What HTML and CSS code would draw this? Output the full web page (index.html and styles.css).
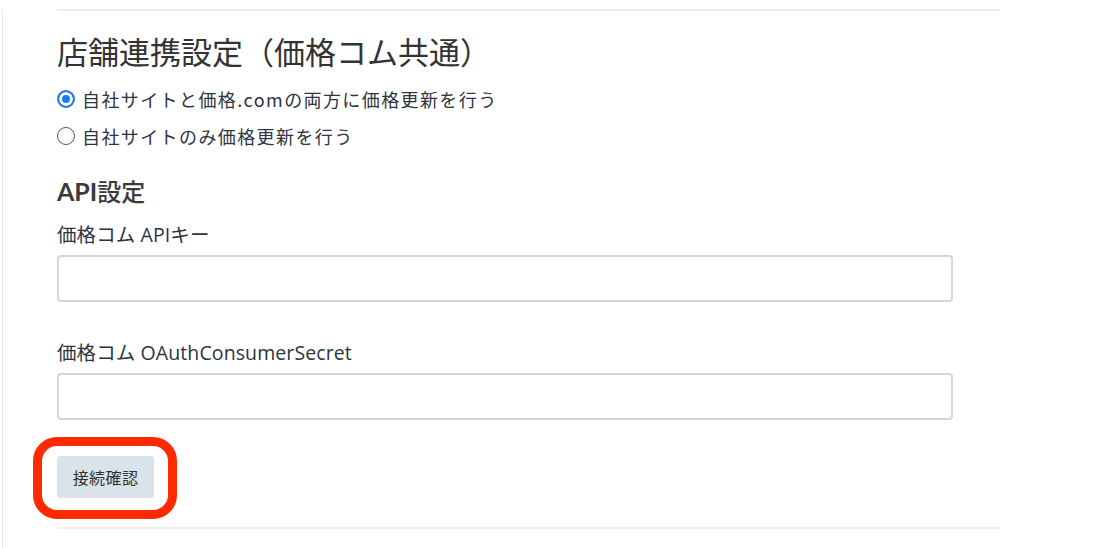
FILE: index.html
```html
<!DOCTYPE html>
<html lang="ja">
<head>
<meta charset="utf-8">
<title>店舗連携設定</title>
<link rel="stylesheet" href="styles.css">
</head>
<body>
<div class="page">
  <div class="content">
    <hr class="rule rule-top">
    <h2 class="title">店舗連携設定（価格コム共通）</h2>
    <div class="radios">
      <label class="radio-row"><input type="radio" name="mode" class="radio" checked><span>自社サイトと価格.comの両方に価格更新を行う</span></label>
      <label class="radio-row"><input type="radio" name="mode" class="radio"><span>自社サイトのみ価格更新を行う</span></label>
    </div>
    <h3 class="subtitle"><span class="subtitle-latin">API</span>設定</h3>
    <div class="field">
      <label class="field-label">価格コム APIキー</label>
      <input type="text" class="text-input">
    </div>
    <div class="field">
      <label class="field-label">価格コム OAuthConsumerSecret</label>
      <input type="text" class="text-input">
    </div>
    <div class="actions">
      <span class="highlight">
        <button class="btn">接続確認</button>
      </span>
    </div>
    <hr class="rule rule-bottom">
  </div>
</div>
</body>
</html>
```
FILE: styles.css
```css
html, body {
  margin: 0;
  padding: 0;
  background: #fff;
}
body {
  font-family: "Open Sans", "Noto Sans CJK JP", sans-serif;
  color: #2b3542;
  overflow: hidden;
}
.page {
  margin-left: 2px;
  border-left: 1px solid #e8e8e8;
  height: 548px;
  padding-left: 54px;
}
.content {
  width: 943px;
}
.rule {
  border: 0;
  border-top: 2px solid #ededed;
  margin: 0;
}
.rule-top {
  margin-top: 9px;
}
.title {
  font-family: "Noto Sans CJK JP", sans-serif;
  font-weight: 400;
  font-size: 31px;
  line-height: 40px;
  color: #333;
  margin: 20px 0 0;
}
.radios {
  display: flex;
  flex-direction: column;
  margin-top: 9px;
}
.radio-row {
  display: flex;
  align-items: center;
  gap: 7px;
  height: 37px;
  font-family: "Noto Sans CJK JP", sans-serif;
  font-size: 18px;
  letter-spacing: 1.4px;
  color: #2e3440;
}
.radio {
  appearance: none;
  -webkit-appearance: none;
  margin: 0;
  width: 18px;
  height: 18px;
  border-radius: 50%;
  border: 1px solid #555;
  background: #fff;
  flex: none;
}
.radio:checked {
  border: 2px solid #1f78f0;
  background: #1f78f0;
  box-shadow: inset 0 0 0 3px #fff;
}
.subtitle {
  font-family: "Noto Sans CJK JP", sans-serif;
  font-weight: 500;
  font-size: 24px;
  line-height: 30px;
  color: #3a3a3a;
  margin: 22px 0 0;
}
.subtitle-latin {
  font-family: "Lato", sans-serif;
  font-weight: 700;
  font-size: 25px;
}
.field {
  display: flex;
  flex-direction: column;
}
.field-label {
  font-size: 19.5px;
  line-height: 26px;
  margin-top: 16px;
  color: #2b3542;
  letter-spacing: 0.1px;
}
.field + .field .field-label {
  margin-top: 38px;
}
.text-input {
  width: 896px;
  height: 47px;
  box-sizing: border-box;
  border: 2px solid #d6d6d6;
  border-radius: 4px;
  margin-top: 7px;
  background: #fff;
}
.actions {
  margin-top: 36px;
  display: flex;
}
.highlight {
  position: relative;
  display: inline-flex;
}
.highlight::after {
  content: "";
  position: absolute;
  left: -24px;
  right: -23px;
  top: -19px;
  bottom: -21px;
  border: 9px solid #ff2a00;
  border-radius: 24px;
  pointer-events: none;
}
.btn {
  width: 97px;
  height: 42px;
  border: 0;
  border-radius: 3px;
  background: #d9e4ea;
  font-family: "Noto Sans CJK JP", sans-serif;
  font-size: 16px;
  letter-spacing: 0.4px;
  color: #333;
  padding: 0;
}
.rule-bottom {
  margin-top: 29px;
}
```
